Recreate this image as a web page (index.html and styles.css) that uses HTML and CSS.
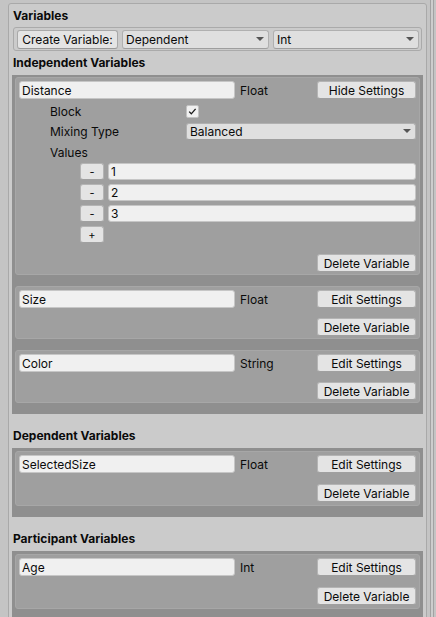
FILE: index.html
```html
<!DOCTYPE html>
<html>
<head>
<meta charset="utf-8">
<link rel="stylesheet" href="styles.css">
</head>
<body>
<div class="app">
  <div class="box">
    <div class="title">Variables</div>
    <div class="create-row">
      <div class="btn create">Create Variable:</div>
      <div class="dropdown dd-dep">Dependent<span class="arrow"></span></div>
      <div class="dropdown dd-type">Int<span class="arrow"></span></div>
    </div>

    <div class="section-label first">Independent Variables</div>
    <div class="panel">
      <div class="card">
        <div class="row-main">
          <div class="field name">Distance</div>
          <span class="type">Float</span>
          <div class="btn wide">Hide Settings</div>
        </div>
        <div class="set-row block-row">
          <span class="set-label">Block</span>
          <span class="checkbox"><svg width="11" height="11" viewBox="0 0 11 11"><polyline points="2.2,5.6 4.3,7.8 8.6,2.8" fill="none" stroke="#1a1a1a" stroke-width="1.3"/></svg></span>
        </div>
        <div class="set-row mix-row">
          <span class="set-label">Mixing Type</span>
          <div class="dropdown dd-mix">Balanced<span class="arrow"></span></div>
        </div>
        <div class="set-row values-row">
          <span class="set-label">Values</span>
        </div>
        <div class="values">
          <div class="val-row"><div class="btn small">-</div><div class="field val">1</div></div>
          <div class="val-row"><div class="btn small">-</div><div class="field val">2</div></div>
          <div class="val-row"><div class="btn small">-</div><div class="field val">3</div></div>
          <div class="val-row"><div class="btn small">+</div></div>
        </div>
        <div class="row-del"><div class="btn wide">Delete Variable</div></div>
      </div>

      <div class="card">
        <div class="row-main">
          <div class="field name">Size</div>
          <span class="type">Float</span>
          <div class="btn wide">Edit Settings</div>
        </div>
        <div class="row-del"><div class="btn wide">Delete Variable</div></div>
      </div>

      <div class="card">
        <div class="row-main">
          <div class="field name">Color</div>
          <span class="type">String</span>
          <div class="btn wide">Edit Settings</div>
        </div>
        <div class="row-del"><div class="btn wide">Delete Variable</div></div>
      </div>
    </div>

    <div class="section-label">Dependent Variables</div>
    <div class="panel roomy">
      <div class="card">
        <div class="row-main">
          <div class="field name">SelectedSize</div>
          <span class="type">Float</span>
          <div class="btn wide">Edit Settings</div>
        </div>
        <div class="row-del"><div class="btn wide">Delete Variable</div></div>
      </div>
    </div>

    <div class="section-label">Participant Variables</div>
    <div class="panel roomy">
      <div class="card">
        <div class="row-main">
          <div class="field name">Age</div>
          <span class="type">Int</span>
          <div class="btn wide">Edit Settings</div>
        </div>
        <div class="row-del"><div class="btn wide">Delete Variable</div></div>
      </div>
    </div>
  </div>
  <div class="scrollbar"><div class="track"></div></div>
</div>
</body>
</html>
```

FILE: styles.css
```css
* { box-sizing: border-box; }
html, body {
  margin: 0;
  padding: 0;
  height: 617px;
  overflow: hidden;
  background: #c4c4c4;
  font-family: Inter, "Liberation Sans", sans-serif;
  font-size: 12px;
  color: #0a0a0a;
}
.app {
  display: flex;
  align-items: flex-start;
  height: 617px;
}
.box {
  margin: 3px 0 0 8px;
  width: 419px;
  height: 700px;
  background: #cbcbcb;
  border: 1px solid #a9a9a9;
  border-radius: 3px;
  padding: 0 3px;
}
.scrollbar {
  width: 9px;
  height: 617px;
  padding-left: 3px;
}
.track {
  width: 4px;
  height: 100%;
  border-left: 1px solid #a2a2a2;
  border-right: 1px solid #a2a2a2;
  background: #cdcdcd;
}
.title {
  height: 23px;
  line-height: 23px;
  font-weight: 700;
  padding-left: 1px;
}
.create-row {
  margin: 0 1px;
  height: 24px;
  border: 1px solid #aaaaaa;
  border-radius: 3px;
  padding: 1px 2px 1px 3px;
  display: flex;
  align-items: center;
  gap: 4px;
}
.btn {
  display: flex;
  align-items: center;
  justify-content: center;
  background: #e4e4e4;
  border: 1px solid #b4b4b4;
  border-bottom-color: #a0a0a0;
  border-radius: 3px;
  height: 18px;
  white-space: nowrap;
}
.btn.create {
  width: 101px;
  height: 19px;
  border-color: #a9a9a9;
  border-bottom-color: #999;
}
.dropdown {
  position: relative;
  display: flex;
  align-items: center;
  background: #dfdfdf;
  border: 1px solid #b0b0b0;
  border-bottom-color: #9e9e9e;
  border-radius: 3px;
  height: 19px;
  padding-left: 3px;
}
.dd-dep { width: 147px; }
.dd-type { flex: 1; }
.arrow {
  position: absolute;
  right: 4px;
  top: 50%;
  margin-top: -2px;
  width: 0;
  height: 0;
  border-left: 4px solid transparent;
  border-right: 4px solid transparent;
  border-top: 4px solid #555555;
}
.section-label {
  margin-top: 10px;
  height: 24px;
  line-height: 24px;
  font-weight: 700;
  padding-left: 1px;
}
.section-label.first { margin-top: 0; }
.panel {
  background: #8f8f8f;
  padding: 2px 3px 11px 3px;
  display: flex;
  flex-direction: column;
  gap: 11px;
}
.panel.roomy { padding-top: 3px; }
.card {
  background: #9f9f9f;
  border: 1px solid #a7a7a7;
  border-radius: 3px;
  padding: 3px 3px 2px 3px;
}
.panel.roomy .card { padding-bottom: 3px; }
.row-main {
  display: flex;
  align-items: center;
  height: 18px;
}
.field {
  background: #f0f0f0;
  border: 1px solid #c6c6c6;
  border-radius: 3px;
  height: 18px;
  display: flex;
  align-items: center;
  padding-left: 2px;
  white-space: nowrap;
}
.field.name { width: 216px; }
.type { margin-left: 5px; }
.btn.wide {
  margin-left: auto;
  width: 99px;
}
.row-del {
  margin-top: 10px;
  display: flex;
  height: 18px;
}
.panel.roomy .row-del { margin-top: 11px; }
.set-row {
  display: flex;
  align-items: center;
  height: 18px;
  padding-left: 31px;
}
.block-row { margin-top: 3px; }
.mix-row { margin-top: 2px; }
.values-row { margin-top: 3px; }
.set-label { width: 136px; flex: none; }
.checkbox {
  width: 13px;
  height: 13px;
  background: #f0f0f0;
  border: 1px solid #c2c2c2;
  border-radius: 2px;
  display: flex;
  align-items: center;
  justify-content: center;
}
.dd-mix {
  flex: 1;
  height: 17px;
}
.values {
  margin-top: 2px;
  padding-left: 61px;
  display: flex;
  flex-direction: column;
  gap: 4px;
}
.val-row {
  display: flex;
  align-items: center;
  gap: 4px;
  height: 17px;
}
.btn.small {
  width: 24px;
  height: 17px;
  font-size: 11px;
}
.field.val {
  flex: 1;
  height: 17px;
}
.values + .row-del { margin-top: 11px; }
```
